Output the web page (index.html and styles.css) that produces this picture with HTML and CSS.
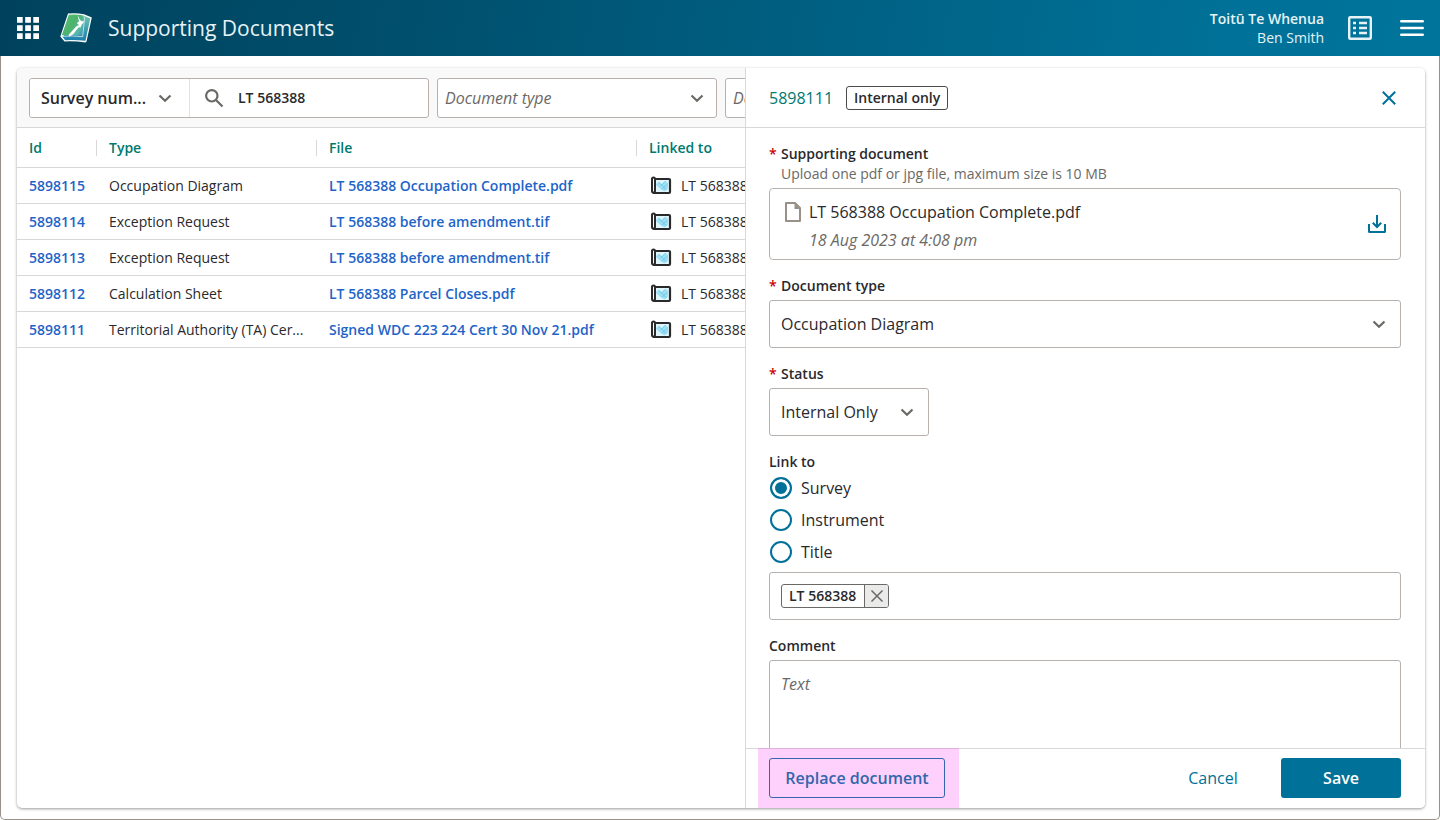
FILE: index.html
```html
<!DOCTYPE html>
<html lang="en">
<head>
  <meta charset="UTF-8">
  <meta name="viewport" content="width=device-width, initial-scale=1.0">
  <title>Supporting Documents</title>
  <link rel="stylesheet" href="styles.css">
</head>
<body>

  <!-- shared icons -->
  <svg class="sprite" aria-hidden="true">
    <symbol id="chevron" viewBox="0 0 14 14">
      <path d="M1.500 4.500 7 9.700l5.500-5.200" fill="none" stroke="#6b6966" stroke-width="2.200"/>
    </symbol>
    <symbol id="plan" viewBox="0 0 24 20">
      <rect x="4" y="3" width="17" height="14" rx="1" fill="#e0f6fd" stroke="#2a292c" stroke-width="2.200"/>
      <path d="M7 8 10 5.500 13 8.500 16.500 4.500 19 7v5.500L15.500 15.500 12 13.500 7.500 9.500z" fill="#9fe0f5"/>
      <path d="M12 9.500 16 5.500M13 13 18.500 8M10 6.500l7.500 7.500" stroke="#6cc9e8" stroke-width="1" fill="none"/>
      <rect x="3" y="1.500" width="3" height="15" rx="1.500" fill="#fff" stroke="#2a292c" stroke-width="2"/>
    </symbol>
  </svg>

  <header class="header">
    <button class="icon-btn" aria-label="Apps">
      <svg width="24" height="24" viewBox="0 0 24 24" fill="#fff">
        <path d="M1 1h5.700v5.700H1zM9.200 1h5.700v5.700H9.200zM17.300 1H23v5.700h-5.700zM1 9.200h5.700v5.700H1zM9.200 9.200h5.700v5.700H9.200zM17.300 9.200H23v5.700h-5.700zM1 17.300h5.700V23H1zM9.200 17.300h5.700V23H9.200zM17.300 17.300H23V23h-5.700z"/>
      </svg>
    </button>
    <svg class="logo" width="32" height="32" viewBox="0 0 32 32">
      <defs>
        <linearGradient id="cover" x1="0" y1="0.200" x2="1" y2="0.800">
          <stop offset="0" stop-color="#55bd72"/>
          <stop offset="0.500" stop-color="#4db36c"/>
          <stop offset="0.800" stop-color="#5bb9a8"/>
          <stop offset="1" stop-color="#3d9fb4"/>
        </linearGradient>
        <linearGradient id="edge" x1="0" y1="0" x2="0" y2="1">
          <stop offset="0" stop-color="#6cc3b0"/>
          <stop offset="1" stop-color="#1b7fae"/>
        </linearGradient>
      </defs>
      <path d="M8 1.500Q16 .500 24 2.200L31.800 5.500 26.500 29.500 25.500 30.500Q14 28.800 4.500 29.500L.300 24.500Z" fill="#fff"/>
      <path d="M24.500 4 30.300 6.500 25.500 28.800Q14 27.500 5.200 28.200L2.500 24.800Z" fill="url(#edge)"/>
      <path d="M8.800 2.800Q16 2 23.700 3.500L22 23.500Q11 22 1.800 23.300Z" fill="url(#cover)"/>
      <path d="M24.700 5 22.700 24.700Q12 23.300 3 24.400" fill="none" stroke="#d8f0ef" stroke-width=".800"/>
      <path d="M17.500 3 19.500 7 21 9 24.500 9.500 21.800 12.500 20.500 15.500 18 15 18.500 12.500 16.800 11 19 9.500Z" fill="#fff"/>
      <path d="M17.200 13.500 19 15 16 18.500 13.500 22 9.500 24.500 8.500 23 12.500 18.500Z" fill="#fff"/>
    </svg>
    <h1 class="title">Supporting Documents</h1>
    <div class="user">
      <div class="user-org">Toitū Te Whenua</div>
      <div>Ben Smith</div>
    </div>
    <button class="icon-btn" aria-label="Tasks">
      <svg width="24" height="24" viewBox="0 0 24 24" fill="none" stroke="#e6f2f6">
        <rect x="1.200" y="1.200" width="21.600" height="21.600" rx="1" stroke-width="2.400"/>
        <path d="M5 7h3M5 12h3M5 17h3" stroke-width="2.600"/>
        <path d="M11 7h8M11 12h8M11 17h8" stroke-width="2.400"/>
      </svg>
    </button>
    <button class="icon-btn menu-btn" aria-label="Menu">
      <svg width="24" height="24" viewBox="0 0 24 24" stroke="#fff" stroke-width="2.600" stroke-linecap="round">
        <path d="M1.300 5.300h21.400M1.300 12h21.400M1.300 18.700h21.400"/>
      </svg>
    </button>
  </header>

  <main class="main">
    <div class="card">

      <section class="list">
        <div class="toolbar">
          <div class="search">
            <div class="select search-by">
              <select aria-label="Search by"><option>Survey num...</option></select>
              <svg class="chevron"><use href="#chevron"/></svg>
            </div>
            <svg class="search-icon" width="20" height="20" viewBox="0 0 20 20" fill="none" stroke="#6b6966" stroke-width="2.200">
              <circle cx="7.800" cy="7.800" r="5.700"/>
              <path d="M12 12l6.500 6.500"/>
            </svg>
            <input class="search-input" type="text" value="LT 568388" aria-label="Survey number">
          </div>
          <div class="select filter">
            <select aria-label="Document type filter"><option>Document type</option></select>
            <svg class="chevron"><use href="#chevron"/></svg>
          </div>
          <div class="select filter">
            <select aria-label="Document status filter"><option>Document status</option></select>
            <svg class="chevron"><use href="#chevron"/></svg>
          </div>
        </div>

        <table class="docs">
          <thead>
            <tr>
              <th class="col-id"><span>Id</span></th>
              <th class="col-type"><span>Type</span></th>
              <th class="col-file"><span>File</span></th>
              <th class="col-linked"><span>Linked to</span></th>
            </tr>
          </thead>
          <tbody>
            <tr>
              <td><a href="#">5898115</a></td>
              <td>Occupation Diagram</td>
              <td><a href="#">LT 568388 Occupation Complete.pdf</a></td>
              <td><div class="linked"><svg class="plan"><use href="#plan"/></svg>LT 568388</div></td>
            </tr>
            <tr>
              <td><a href="#">5898114</a></td>
              <td>Exception Request</td>
              <td><a href="#">LT 568388 before amendment.tif</a></td>
              <td><div class="linked"><svg class="plan"><use href="#plan"/></svg>LT 568388</div></td>
            </tr>
            <tr>
              <td><a href="#">5898113</a></td>
              <td>Exception Request</td>
              <td><a href="#">LT 568388 before amendment.tif</a></td>
              <td><div class="linked"><svg class="plan"><use href="#plan"/></svg>LT 568388</div></td>
            </tr>
            <tr>
              <td><a href="#">5898112</a></td>
              <td>Calculation Sheet</td>
              <td><a href="#">LT 568388 Parcel Closes.pdf</a></td>
              <td><div class="linked"><svg class="plan"><use href="#plan"/></svg>LT 568388</div></td>
            </tr>
            <tr>
              <td><a href="#">5898111</a></td>
              <td>Territorial Authority (TA) Cer...</td>
              <td><a href="#">Signed WDC 223 224 Cert 30 Nov 21.pdf</a></td>
              <td><div class="linked"><svg class="plan"><use href="#plan"/></svg>LT 568388</div></td>
            </tr>
          </tbody>
        </table>
      </section>

      <form class="panel">
        <div class="panel-header">
          <h2 class="panel-title">5898111</h2>
          <span class="badge">Internal only</span>
          <button type="button" class="icon-btn close-btn" aria-label="Close">
            <svg width="24" height="24" viewBox="0 0 24 24" stroke="#007198" stroke-width="2">
              <path d="M5.800 5.800l12.400 12.400M18.200 5.800 5.800 18.200"/>
            </svg>
          </button>
        </div>

        <div class="panel-body">
          <div class="field">
            <div class="label"><span class="required">*</span>Supporting document</div>
            <div class="hint">Upload one pdf or jpg file, maximum size is 10 MB</div>
            <div class="file-box">
              <svg class="file-icon" width="16" height="20" viewBox="0 0 16 20">
                <path d="M1 1h9l5 5v13H1z" fill="#fff" stroke="#989189" stroke-width="2" stroke-linejoin="round"/>
                <path d="M9.500 1v6H15z" fill="#989189"/>
              </svg>
              <div class="file-info">
                <div>LT 568388 Occupation Complete.pdf</div>
                <div class="file-date">18 Aug 2023 at 4:08 pm</div>
              </div>
              <button type="button" class="icon-btn" aria-label="Download">
                <svg width="24" height="24" viewBox="0 0 24 24" fill="none" stroke="#007198" stroke-width="2">
                  <path d="M4 12v7.500q0 .500.500.500h15q.500 0 .500-.500V12"/>
                  <path d="M12 3v12M7.800 10.800 12 15l4.200-4.200"/>
                </svg>
              </button>
            </div>
          </div>

          <div class="field">
            <label class="label" for="docType"><span class="required">*</span>Document type</label>
            <div class="select large">
              <select id="docType"><option>Occupation Diagram</option></select>
              <svg class="chevron"><use href="#chevron"/></svg>
            </div>
          </div>

          <div class="field">
            <label class="label" for="status"><span class="required">*</span>Status</label>
            <div class="select large status">
              <select id="status"><option>Internal Only</option></select>
              <svg class="chevron"><use href="#chevron"/></svg>
            </div>
          </div>

          <div class="field">
            <div class="label">Link to</div>
            <label class="radio"><input type="radio" name="link" checked>Survey</label>
            <label class="radio"><input type="radio" name="link">Instrument</label>
            <label class="radio"><input type="radio" name="link">Title</label>
            <div class="tags">
              <span class="tag">
                LT 568388
                <button type="button" class="tag-remove" aria-label="Remove LT 568388">
                  <svg width="14" height="14" viewBox="0 0 14 14" stroke="#6b6966" stroke-width="1.500">
                    <path d="M1.500 1.500l11 11M12.500 1.500l-11 11"/>
                  </svg>
                </button>
              </span>
            </div>
          </div>

          <div class="field">
            <label class="label" for="comment">Comment</label>
            <textarea id="comment" class="comment" placeholder="Text"></textarea>
          </div>
        </div>

        <div class="panel-footer">
          <div class="highlight">
            <button type="button" class="btn btn-replace">Replace document</button>
          </div>
          <button type="button" class="btn btn-cancel">Cancel</button>
          <button type="button" class="btn btn-save">Save</button>
        </div>
      </form>

    </div>
  </main>

</body>
</html>
```
FILE: styles.css
```css
* {
  box-sizing: border-box;
}
body {
  margin: 0;
  height: 100vh;
  display: flex;
  flex-direction: column;
  font-family: "Open Sans", "Noto Sans", sans-serif;
  font-size: 14px;
  line-height: 20px;
  color: #2a292c;
  background-color: #fff;
}
button,
input,
select,
textarea {
  font: inherit;
  color: inherit;
}
.sprite {
  display: none;
}
.icon-btn {
  display: flex;
  padding: 0;
  border: none;
  background: none;
  cursor: pointer;
}

/* Header */
.header {
  flex: none;
  height: 56px;
  padding: 0 16px;
  display: flex;
  align-items: center;
  color: #e6f2f6;
  background: linear-gradient(100deg, #00425d 0%, #00506e 30%, #007198 85%, #00749b 100%);
}
.logo {
  margin-left: 20px;
}
.title {
  flex: 1;
  margin: 0 0 0 16px;
  font-size: 21px;
  line-height: 28px;
  font-weight: 400;
}
.user {
  margin-right: 24px;
  line-height: 19px;
  text-align: right;
}
.user-org {
  font-weight: 600;
}
.menu-btn {
  margin-left: 28px;
}

/* Page body */
.main {
  flex: 1;
  min-height: 0;
  padding: 12px 14px 11px 16px;
  display: flex;
  border: 1px solid #989189;
  border-top: none;
  border-radius: 0 0 5px 5px;
}
.card {
  flex: 1;
  min-width: 0;
  display: flex;
  overflow: hidden;
  border-radius: 5px;
  box-shadow: 0 1px 3px rgba(0, 0, 0, 0.4);
}
.list {
  flex: 1;
  min-width: 0;
  overflow: hidden;
}
.toolbar {
  height: 60px;
  padding: 10px 12px 9px;
  display: flex;
  gap: 8px;
  background-color: #f9f9f9;
  border-bottom: 1px solid #d8d8d8;
}

/* Drop-downs */
.select {
  position: relative;
  background-color: #fff;
  border: 1px solid #b8b2ae;
  border-radius: 3px;
}
.select select {
  width: 100%;
  height: 100%;
  padding: 0 40px 0 7px;
  border: none;
  border-radius: 3px;
  background: none;
  appearance: none;
  font-size: 16px;
}
.chevron {
  position: absolute;
  top: 50%;
  right: 12px;
  width: 14px;
  height: 14px;
  margin-top: -7px;
  pointer-events: none;
}
.filter {
  flex: none;
  width: 280px;
}
.filter select {
  font-style: italic;
  color: #6b6966;
}
.large {
  height: 48px;
}
.large select {
  padding-left: 11px;
}
.large .chevron {
  right: 14px;
}
.status {
  width: 160px;
}

/* Search box */
.search {
  flex: none;
  width: 400px;
  display: flex;
  align-items: center;
  background-color: #fff;
  border: 1px solid #b8b2ae;
  border-radius: 3px;
}
.search-by {
  width: 160px;
  height: 100%;
  border: none;
  border-right: 1px solid #e2e2e2;
  border-radius: 3px 0 0 3px;
}
.search-by select {
  padding-left: 11px;
  font-weight: 600;
}
.search-by .chevron {
  right: 17px;
}
.search-icon {
  margin: 0 14px;
}
.search-input {
  flex: 1;
  min-width: 0;
  padding: 0;
  border: none;
  outline: none;
  font-weight: 600;
}

/* Documents table */
.docs {
  width: 960px;
  table-layout: fixed;
  border-collapse: separate;
  border-spacing: 0;
}
.docs th {
  height: 40px;
  padding: 0;
  text-align: left;
  font-weight: 600;
  color: #00796f;
  border-bottom: 1px solid #d8d8d8;
}
.docs th span {
  display: block;
  padding-left: 12px;
  line-height: 16px;
  border-right: 1px solid #d8d8d8;
}
.docs td {
  height: 36px;
  padding: 0 12px;
  white-space: nowrap;
  overflow: hidden;
  border-bottom: 1px solid #d8d8d8;
}
.docs a {
  font-weight: 600;
  color: #1e64c8;
  text-decoration: none;
}
.col-id {
  width: 80px;
}
.col-type {
  width: 220px;
}
.col-file {
  width: 320px;
}
.linked {
  display: flex;
  align-items: center;
  gap: 8px;
}
.plan {
  width: 24px;
  height: 20px;
}

/* Edit panel */
.panel {
  flex: none;
  width: 680px;
  display: flex;
  flex-direction: column;
  border-left: 1px solid #d8d8d8;
  background-color: #fff;
}
.panel-header {
  flex: none;
  height: 60px;
  padding: 0 24px 0 23px;
  display: flex;
  align-items: center;
  border-bottom: 1px solid #d8d8d8;
}
.panel-title {
  margin: 0 13px 0 0;
  font-size: 16px;
  font-weight: 500;
  color: #00796f;
}
.badge {
  padding: 1px 7px;
  font-weight: 600;
  border: 1px solid #4b4a4d;
  border-radius: 3px;
}
.close-btn {
  margin-left: auto;
}
.panel-body {
  flex: 1;
  min-height: 0;
  padding: 16px 24px 16px 23px;
  overflow-y: auto;
  scrollbar-width: none;
}
.field {
  margin-bottom: 16px;
}
.label {
  display: block;
  font-weight: 600;
}
.required {
  display: inline-block;
  width: 12px;
  color: #cc0000;
}
.hint {
  padding-left: 12px;
  color: #6b6966;
}
.label + .select,
.label + .comment,
.hint + .file-box {
  margin-top: 4px;
}
.file-box {
  height: 72px;
  padding: 0 11px 0 15px;
  display: flex;
  align-items: center;
  border: 1px solid #b8b2ae;
  border-radius: 4px;
}
.file-icon {
  align-self: flex-start;
  margin-top: 13px;
}
.file-info {
  flex: 1;
  padding: 4px 0 0 8px;
  font-size: 16px;
  line-height: 28px;
}
.file-date {
  font-style: italic;
  color: #6b6966;
}
.radio {
  height: 32px;
  display: flex;
  align-items: center;
  gap: 9px;
  font-size: 16px;
}
.radio input {
  appearance: none;
  width: 22px;
  height: 22px;
  margin: 0 0 0 1px;
  border: 2px solid #007198;
  border-radius: 50%;
}
.radio input:checked {
  background-color: #007198;
  box-shadow: inset 0 0 0 3px #fff;
}
.tags {
  margin-top: 4px;
  height: 48px;
  padding: 0 11px;
  display: flex;
  align-items: center;
  border: 1px solid #b8b2ae;
  border-radius: 3px;
}
.tag {
  height: 24px;
  padding-left: 7px;
  display: flex;
  align-items: center;
  gap: 8px;
  font-weight: 600;
  border: 1px solid #6b6966;
  border-radius: 3px;
}
.tag-remove {
  width: 24px;
  height: 22px;
  padding: 0;
  display: flex;
  align-items: center;
  justify-content: center;
  border: none;
  border-left: 1px solid #6b6966;
  border-radius: 0 2px 2px 0;
  background-color: #eaeaea;
  cursor: pointer;
}
.comment {
  display: block;
  width: 100%;
  height: 120px;
  padding: 11px;
  font-size: 16px;
  line-height: 24px;
  border: 1px solid #b8b2ae;
  border-radius: 3px;
  resize: none;
}
.comment::placeholder {
  font-style: italic;
  color: #6b6966;
}

/* Panel footer */
.panel-footer {
  flex: none;
  height: 60px;
  padding: 0 24px 1px 12px;
  display: flex;
  align-items: center;
  gap: 8px;
  border-top: 1px solid #d8d8d8;
}
.highlight {
  margin: -1px auto -1px 0;
  padding: 10px 14px 10px 11px;
  background-color: rgba(250, 0, 240, 0.18);
}
.btn {
  width: 120px;
  height: 40px;
  padding: 0;
  border: none;
  border-radius: 3px;
  font-size: 16px;
  background: none;
  cursor: pointer;
}
.btn-replace {
  display: block;
  width: 176px;
  font-weight: 600;
  color: #3366ac;
  border: 1px solid #3366ac;
}
.btn-cancel {
  color: #007198;
}
.btn-save {
  font-weight: 600;
  color: #fff;
  background-color: #007198;
}
```
